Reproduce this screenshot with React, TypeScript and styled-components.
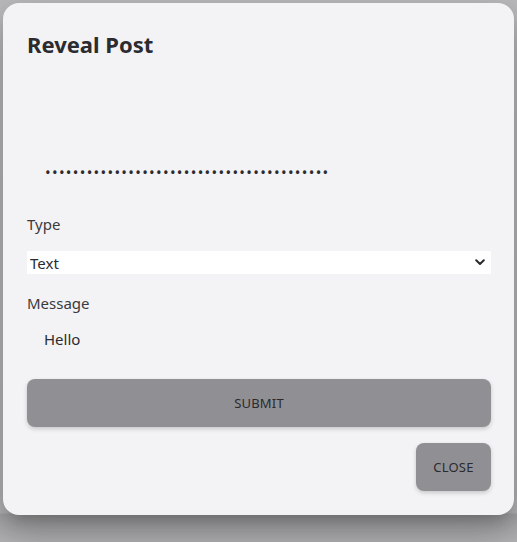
import React from "react";
import styled, { createGlobalStyle } from "styled-components";

const Global = createGlobalStyle`
  html, body { margin: 0; padding: 0; }
  body {
    width: 517px;
    height: 542px;
    background: linear-gradient(#bcbcbe 0, #b9b9bb 513px, #a8a8aa 514px, #b6b6b8 542px);
    font-family: "Noto Sans", "Open Sans", sans-serif;
    overflow: hidden;
  }
`;

const Page = styled.div`
  padding: 3px 3px 0 3px;
`;

const Dialog = styled.div`
  width: 511px;
  height: 512px;
  box-sizing: border-box;
  background: #f3f3f5;
  border-radius: 16px;
  box-shadow: 0 11px 15px -7px rgba(0,0,0,0.2), 0 24px 38px 3px rgba(0,0,0,0.14), 0 9px 46px 8px rgba(0,0,0,0.12);
  padding: 28px 23px 0 24px;
  display: flex;
  flex-direction: column;
  color: #2e2e33;
`;

const Title = styled.h2`
  margin: 0;
  font-size: 22px;
  line-height: 26px;
  font-weight: 700;
  color: #2b2b30;
`;

const Masked = styled.input`
  margin-top: 95px;
  height: 40px;
  border: none;
  background: transparent;
  padding: 0 18px;
  font-family: "Noto Sans", sans-serif;
  font-size: 15px;
  color: #2b2b30;
  outline: none;
  letter-spacing: 1.3px;
`;

const Label = styled.label`
  display: block;
  font-size: 15px;
  line-height: 20px;
  color: #3a3a3f;
`;

const TypeLabel = styled(Label)`
  margin-top: 22px;
`;

const MessageLabel = styled(Label)`
  margin-top: 19px;
`;

const SelectWrap = styled.div`
  position: relative;
  margin-top: 17px;
  height: 23px;
`;

const Select = styled.select`
  appearance: none;
  width: 100%;
  height: 23px;
  border: none;
  background: #ffffff;
  padding: 0 0 0 3px;
  font-family: "Noto Sans", sans-serif;
  font-size: 15px;
  color: #2b2b30;
  outline: none;
`;

const Chevron = styled.svg`
  position: absolute;
  right: 6px;
  top: 8px;
  pointer-events: none;
`;

const MessageInput = styled.input`
  margin-top: 6px;
  height: 40px;
  border: none;
  background: transparent;
  padding: 0 17px;
  font-family: "Noto Sans", sans-serif;
  font-size: 15px;
  color: #2b2b30;
  outline: none;
`;

const Button = styled.button<{ $wide?: boolean }>`
  height: 48px;
  border: none;
  border-radius: 8px;
  background: #909094;
  color: #2a2a2f;
  font-family: "Noto Sans", sans-serif;
  font-size: 13px;
  letter-spacing: 0.2px;
  box-shadow: 0 2px 4px rgba(0,0,0,0.18);
  cursor: pointer;
  width: ${(p) => (p.$wide ? "100%" : "75px")};
  align-self: ${(p) => (p.$wide ? "stretch" : "flex-end")};
`;

const SubmitButton = styled(Button)`
  margin-top: 20px;
`;

const CloseButton = styled(Button)`
  margin-top: 16px;
`;

export default function App() {
  return (
    <>
      <Global />
      <Page>
        <Dialog>
          <Title>Reveal Post</Title>
          <Masked type="password" readOnly value={"x".repeat(41)} />
          <TypeLabel>Type</TypeLabel>
          <SelectWrap>
            <Select defaultValue="text">
              <option value="text">Text</option>
              <option value="image">Image</option>
            </Select>
            <Chevron width="10" height="7" viewBox="0 0 10 7">
              <path d="M1.2 1.2 L5 5 L8.8 1.2" fill="none" stroke="#2b2b30" strokeWidth="2" strokeLinecap="round" strokeLinejoin="round" />
            </Chevron>
          </SelectWrap>
          <MessageLabel>Message</MessageLabel>
          <MessageInput readOnly value="Hello" />
          <SubmitButton $wide>SUBMIT</SubmitButton>
          <CloseButton>CLOSE</CloseButton>
        </Dialog>
      </Page>
    </>
  );
}
